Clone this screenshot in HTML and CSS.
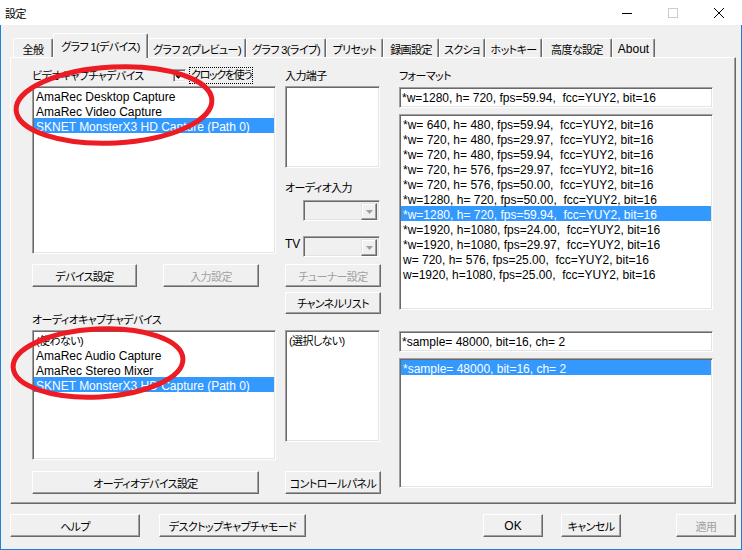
FILE: index.html
```html
<!DOCTYPE html>
<html lang="ja">
<head>
<meta charset="utf-8">
<title>設定</title>
<link rel="stylesheet" href="styles.css">
</head>
<body>
<div class="window">
  <div class="titlebar">
    <span class="title ja">設定</span>
    <div class="caption">
      <span class="cap-btn"><svg width="10" height="10" viewBox="0 0 10 10"><path d="M0 5.5H10" stroke="#000" stroke-width="1"/></svg></span>
      <span class="cap-btn"><svg width="10" height="10" viewBox="0 0 10 10"><rect x="0.5" y="0.5" width="9" height="9" fill="none" stroke="#cccccc" stroke-width="1"/></svg></span>
      <span class="cap-btn"><svg width="10" height="10" viewBox="0 0 10 10"><path d="M0 0L10 10M10 0L0 10" stroke="#000" stroke-width="1"/></svg></span>
    </div>
  </div>
  <div class="frame">
    <div class="tabs ja">
      <div class="tab t1">全般</div>
      <div class="tab sel t2">グラフ 1(デバイス)</div>
      <div class="tab t3">グラフ 2(プレビュー)</div>
      <div class="tab t4">グラフ 3(ライブ)</div>
      <div class="tab t5">プリセット</div>
      <div class="tab t6">録画設定</div>
      <div class="tab t7">スクショ</div>
      <div class="tab t8">ホットキー</div>
      <div class="tab t9">高度な設定</div>
      <div class="tab t10 latin">About</div>
    </div>
    <div class="panel">
      <div class="col col-left">
        <div class="hdr">
          <span class="hdr-label ja">ビデオキャプチャデバイス</span>
          <span class="check"><svg width="9" height="9" viewBox="0 0 9 9"><path d="M1 4.2L3.4 6.6L8 2" fill="none" stroke="#000" stroke-width="1.6"/></svg></span>
          <span class="focus ja">クロックを使う</span>
        </div>
        <div class="listbox video-list">
          <div class="item">AmaRec Desktop Capture</div>
          <div class="item">AmaRec Video Capture</div>
          <div class="item sel">SKNET MonsterX3 HD Capture (Path 0)</div>
        </div>
        <div class="btnrow">
          <button class="btn ja btn-dev">デバイス設定</button>
          <button class="btn ja btn-input" disabled>入力設定</button>
        </div>
        <div class="label ja audio-label">オーディオキャプチャデバイス</div>
        <div class="listbox audio-list">
          <div class="item"><span class="ja">(使わない)</span></div>
          <div class="item">AmaRec Audio Capture</div>
          <div class="item">AmaRec Stereo Mixer</div>
          <div class="item sel">SKNET MonsterX3 HD Capture (Path 0)</div>
        </div>
        <button class="btn ja btn-audio">オーディオデバイス設定</button>
      </div>

      <div class="col col-mid">
        <div class="hdr ja">入力端子</div>
        <div class="listbox input-list"></div>
        <div class="label ja ai-label">オーディオ入力</div>
        <div class="combo combo-ai"><span class="combo-btn"><svg width="7" height="4" viewBox="0 0 7 4"><path d="M0 0H7L3.5 4Z" fill="#a0a0a0"/></svg></span></div>
        <div class="tv-row">
          <span class="tv-label">TV</span>
          <div class="combo"><span class="combo-btn"><svg width="7" height="4" viewBox="0 0 7 4"><path d="M0 0H7L3.5 4Z" fill="#a0a0a0"/></svg></span></div>
        </div>
        <button class="btn ja btn-tuner" disabled>チューナー設定</button>
        <button class="btn ja btn-channel">チャンネルリスト</button>
        <div class="listbox line-list">
          <div class="item"><span class="ja">(選択しない)</span></div>
        </div>
        <button class="btn ja btn-control">コントロールパネル</button>
      </div>

      <div class="col col-right">
        <div class="hdr ja">フォーマット</div>
        <div class="edit edit-format">*w=1280, h= 720, fps=59.94,  fcc=YUY2, bit=16</div>
        <div class="listbox format-list">
          <div class="item">*w= 640, h= 480, fps=59.94,  fcc=YUY2, bit=16</div>
          <div class="item">*w= 720, h= 480, fps=29.97,  fcc=YUY2, bit=16</div>
          <div class="item">*w= 720, h= 480, fps=59.94,  fcc=YUY2, bit=16</div>
          <div class="item">*w= 720, h= 576, fps=29.97,  fcc=YUY2, bit=16</div>
          <div class="item">*w= 720, h= 576, fps=50.00,  fcc=YUY2, bit=16</div>
          <div class="item">*w=1280, h= 720, fps=50.00,  fcc=YUY2, bit=16</div>
          <div class="item sel">*w=1280, h= 720, fps=59.94,  fcc=YUY2, bit=16</div>
          <div class="item">*w=1920, h=1080, fps=24.00,  fcc=YUY2, bit=16</div>
          <div class="item">*w=1920, h=1080, fps=29.97,  fcc=YUY2, bit=16</div>
          <div class="item">w= 720, h= 576, fps=25.00,  fcc=YUY2, bit=16</div>
          <div class="item">w=1920, h=1080, fps=25.00,  fcc=YUY2, bit=16</div>
        </div>
        <div class="edit edit-audio">*sample= 48000, bit=16, ch= 2</div>
        <div class="listbox sample-list">
          <div class="item sel">*sample= 48000, bit=16, ch= 2</div>
        </div>
      </div>
    </div>
    <div class="bottom">
      <button class="btn ja b-help">ヘルプ</button>
      <button class="btn ja b-desk">デスクトップキャプチャモード</button>
      <button class="btn b-ok">OK</button>
      <button class="btn ja b-cancel">キャンセル</button>
      <button class="btn ja b-apply" disabled>適用</button>
    </div>
  </div>
  <svg class="marks" width="742" height="550" viewBox="0 0 742 550">
    <ellipse cx="114" cy="105" rx="98" ry="38" transform="rotate(-3 114 105)" fill="none" stroke="#ed1c24" stroke-width="5"/>
    <ellipse cx="98" cy="363" rx="85" ry="34" transform="rotate(-3 98 363)" fill="none" stroke="#ed1c24" stroke-width="5"/>
  </svg>
</div>
</body>
</html>
```
FILE: styles.css
```css
* { box-sizing: border-box; }
html, body { margin: 0; padding: 0; }
body {
  width: 742px;
  height: 550px;
  overflow: hidden;
  background: #f0f0f0;
  font-family: "Liberation Sans", "Noto Sans CJK JP", sans-serif;
  font-size: 12px;
  color: #000;
  font-feature-settings: "palt";
}
.ja { font-size: 11px; letter-spacing: -0.6px; }
.latin { font-size: 12px; letter-spacing: 0; }
.window { position: relative; width: 742px; height: 550px; }

.titlebar { height: 25px; background: #fff; display: flex; align-items: center; }
.title { padding-left: 5px; }
.caption { margin-left: auto; display: flex; height: 100%; }
.cap-btn { width: 46px; height: 100%; display: flex; align-items: center; justify-content: center; }
.cap-btn svg { display: block; }

.frame {
  height: 525px;
  border: 1px solid #1a82d8;
  border-top: none;
  padding: 8px 0 0 9px;
}

.tabs { display: flex; align-items: flex-end; height: 24px; margin-left: 3px; position: relative; z-index: 1; }
.tab {
  height: 19px;
  border-top: 1px solid #fff;
  border-left: 1px solid #fff;
  border-right: 1px solid #696969;
  box-shadow: inset -1px 0 #a0a0a0;
  border-radius: 2px 2px 0 0;
  display: flex;
  align-items: center;
  justify-content: center;
  white-space: nowrap;
  background: #f0f0f0;
  padding-top: 1px;
}
.tab.sel { height: 25px; margin-bottom: -1px; padding-bottom: 2px; }
.t1 { width: 40px; }
.t2 { width: 95px; }
.t3 { width: 98px; }
.t4 { width: 80px; }
.t5 { width: 57px; }
.t6 { width: 56px; }
.t7 { width: 46px; }
.t8 { width: 57px; }
.t9 { width: 70px; }
.t10 { width: 43px; }

.panel {
  width: 726px;
  height: 447px;
  border: 1px solid;
  border-color: #fff #696969 #696969 #fff;
  box-shadow: inset -1px -1px #a0a0a0;
  display: flex;
  padding: 9px 0 0 21px;
}

.col { display: flex; flex-direction: column; align-items: flex-start; }
.col-left { width: 244px; }
.col-mid { width: 96px; margin-left: 9px; }
.col-right { width: 314px; margin-left: 18px; }

.hdr { height: 16px; line-height: 16px; display: flex; align-items: center; white-space: nowrap; padding-top: 2px; }
.hdr-label { width: 141px; }
.check {
  width: 13px; height: 13px;
  background: #fff;
  border: 1px solid;
  border-color: #a0a0a0 #fff #fff #a0a0a0;
  box-shadow: inset 1px 1px #696969, inset -1px -1px #e3e3e3;
  display: flex; align-items: center; justify-content: center;
  margin-top: -2px;
}
.check svg { display: block; }
.focus { margin-left: 3px; margin-top: -2px; border: 1px dotted #000; height: 17px; line-height: 15px; padding: 0 1px; letter-spacing: -1.3px; }

.label { height: 15px; line-height: 15px; white-space: nowrap; }

.listbox, .edit {
  background: #fff;
  border: 1px solid;
  border-color: #a0a0a0 #fff #fff #a0a0a0;
  box-shadow: inset 1px 1px #696969, inset -1px -1px #e3e3e3;
  padding: 1px;
  overflow: hidden;
  width: 100%;
}
.item { height: 15px; line-height: 15px; padding: 2px 0 0 2px; white-space: pre; }
.item.sel { background: #3399ff; color: #fff; }
.edit { height: 21px; line-height: 18px; padding-left: 2px; white-space: pre; }

.video-list { margin-top: 3px; height: 168px; }
.btnrow { display: flex; margin-top: 10px; }
.btn {
  height: 23px;
  border: 1px solid;
  border-color: #fff #696969 #696969 #fff;
  box-shadow: inset -1px -1px #a0a0a0;
  background: #f0f0f0;
  font-family: inherit;
  font-feature-settings: "palt";
  color: #000;
  padding: 0;
  white-space: nowrap;
  display: flex;
  align-items: center;
  justify-content: center;
}
.btn.ja { font-size: 11px; letter-spacing: -0.6px; }
.btn:not(.ja) { font-size: 12px; }
.btn:disabled { color: #a0a0a0; }
.btn-dev { width: 105px; }
.btn-input { width: 96px; margin-left: 26px; }
.audio-label { margin-top: 26px; }
.audio-list { margin-top: 2px; height: 130px; }
.btn-audio { width: 227px; margin-top: 11px; }

.input-list { margin-top: 3px; height: 82px; width: 95px; }
.ai-label { margin-top: 13px; }
.combo {
  width: 77px; height: 21px;
  border: 1px solid;
  border-color: #a0a0a0 #fff #fff #a0a0a0;
  box-shadow: inset 1px 1px #696969, inset -1px -1px #e3e3e3;
  background: #f0f0f0;
  padding: 2px;
  display: flex;
  justify-content: flex-end;
}
.combo-ai { margin-top: 4px; margin-left: 18px; }
.combo-btn {
  width: 16px; height: 17px;
  border: 1px solid;
  border-color: #e3e3e3 #696969 #696969 #e3e3e3;
  box-shadow: inset -1px -1px #a0a0a0, inset 1px 1px #fff;
  display: flex; align-items: center; justify-content: center;
}
.combo-btn svg { display: block; }
.tv-row { display: flex; margin-top: 15px; }
.tv-label { width: 18px; height: 15px; line-height: 15px; padding-top: 1px; }
.btn-tuner { width: 96px; margin-top: 7px; }
.btn-channel { width: 96px; height: 22px; margin-top: 5px; }
.line-list { margin-top: 16px; height: 112px; width: 95px; }
.btn-control { width: 96px; margin-top: 29px; }

.edit-format { margin-top: 4px; }
.format-list { margin-top: 6px; height: 196px; }
.edit-audio { margin-top: 21px; }
.sample-list { margin-top: 6px; height: 130px; }

.bottom { display: flex; margin-top: 10px; }
.b-help { width: 130px; }
.b-desk { width: 147px; margin-left: 19px; }
.b-ok { width: 60px; margin-left: 177px; }
.b-cancel { width: 60px; margin-left: 18px; }
.b-apply { width: 60px; margin-left: 55px; }

.marks { position: absolute; left: 0; top: 0; pointer-events: none; }
```
